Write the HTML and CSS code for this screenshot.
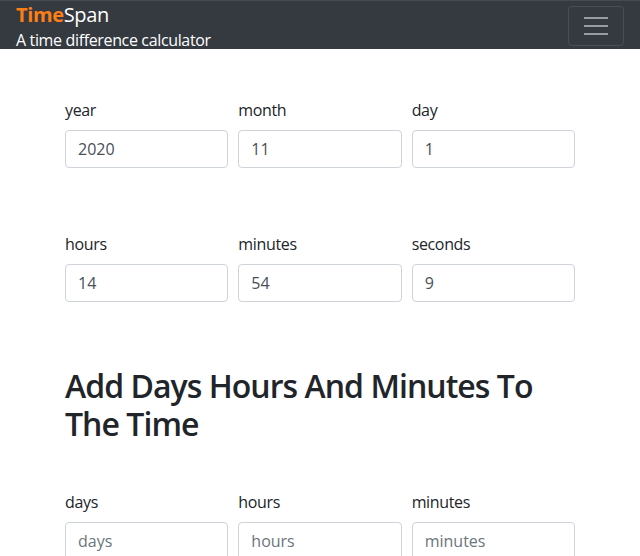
FILE: index.html
```html
<!DOCTYPE html>
<html lang="en">
<head>
<meta charset="utf-8">
<title>TimeSpan</title>
<link rel="stylesheet" href="styles.css">
</head>
<body>
<nav class="navbar">
  <div class="brand">
    <div class="brand-name"><span class="brand-accent">Time</span>Span</div>
    <div class="brand-sub">A time difference calculator</div>
  </div>
  <button class="toggler" type="button" aria-label="Toggle navigation">
    <span class="bar"></span><span class="bar"></span><span class="bar"></span>
  </button>
</nav>
<main class="container">
  <div class="form-row">
    <div class="field"><label>year</label><input class="input" type="text" value="2020"></div>
    <div class="field"><label>month</label><input class="input" type="text" value="11"></div>
    <div class="field"><label>day</label><input class="input" type="text" value="1"></div>
  </div>
  <div class="form-row">
    <div class="field"><label>hours</label><input class="input" type="text" value="14"></div>
    <div class="field"><label>minutes</label><input class="input" type="text" value="54"></div>
    <div class="field"><label>seconds</label><input class="input" type="text" value="9"></div>
  </div>
  <h2 class="heading">Add Days Hours And Minutes To The Time</h2>
  <div class="form-row form-row-tight">
    <div class="field"><label>days</label><input class="input" type="text" placeholder="days"></div>
    <div class="field"><label>hours</label><input class="input" type="text" placeholder="hours"></div>
    <div class="field"><label>minutes</label><input class="input" type="text" placeholder="minutes"></div>
  </div>
</main>
</body>
</html>
```
FILE: styles.css
```css
* { box-sizing: border-box; }
html, body { margin: 0; padding: 0; }
body {
  font-family: "Open Sans", "Noto Sans", sans-serif;
  font-size: 16px;
  line-height: 1.5;
  letter-spacing: -0.022em;
  color: #212529;
  background: #fff;
}
.navbar {
  background: #343a40;
  border-top: 1px solid #454b51;
  height: 49px;
  display: flex;
  align-items: flex-start;
  justify-content: space-between;
  padding: 0 16px;
}
.brand { display: flex; flex-direction: column; color: #fff; margin-top: 3px; }
.brand-name { font-size: 20px; line-height: 22px; }
.brand-accent { color: #fd7e14; font-weight: 700; }
.brand-sub { font-size: 16px; line-height: 20px; margin-top: 4px; }
.toggler {
  width: 56px;
  height: 40px;
  margin-top: 5px;
  background: transparent;
  border: 1px solid rgba(255,255,255,.1);
  border-radius: 4px;
  display: flex;
  flex-direction: column;
  align-items: center;
  justify-content: center;
  gap: 6px;
  padding: 0;
}
.bar { display: block; width: 24px; height: 2px; background: rgba(255,255,255,.5); }
.container { width: 540px; margin: 0 auto; padding: 1px 15px 0; }
.form-row {
  display: grid;
  grid-template-columns: repeat(3, 1fr);
  column-gap: 10px;
  margin-top: 48px;
}
.field { display: flex; flex-direction: column; margin-bottom: 16px; }
label { display: block; margin-bottom: 8px; line-height: 24px; }
.input {
  height: 38px;
  padding: 6px 12px;
  font: inherit;
  color: #495057;
  border: 1px solid #ced4da;
  border-radius: 4px;
  background: #fff;
  width: 100%;
}
.input::placeholder { color: #6c757d; opacity: 1; }
.heading {
  font-size: 32px;
  font-weight: 600;
  line-height: 1.2;
  letter-spacing: -0.03em;
  margin: 49px 0 8px;
}
.form-row-tight { margin-top: 46px; }
```
